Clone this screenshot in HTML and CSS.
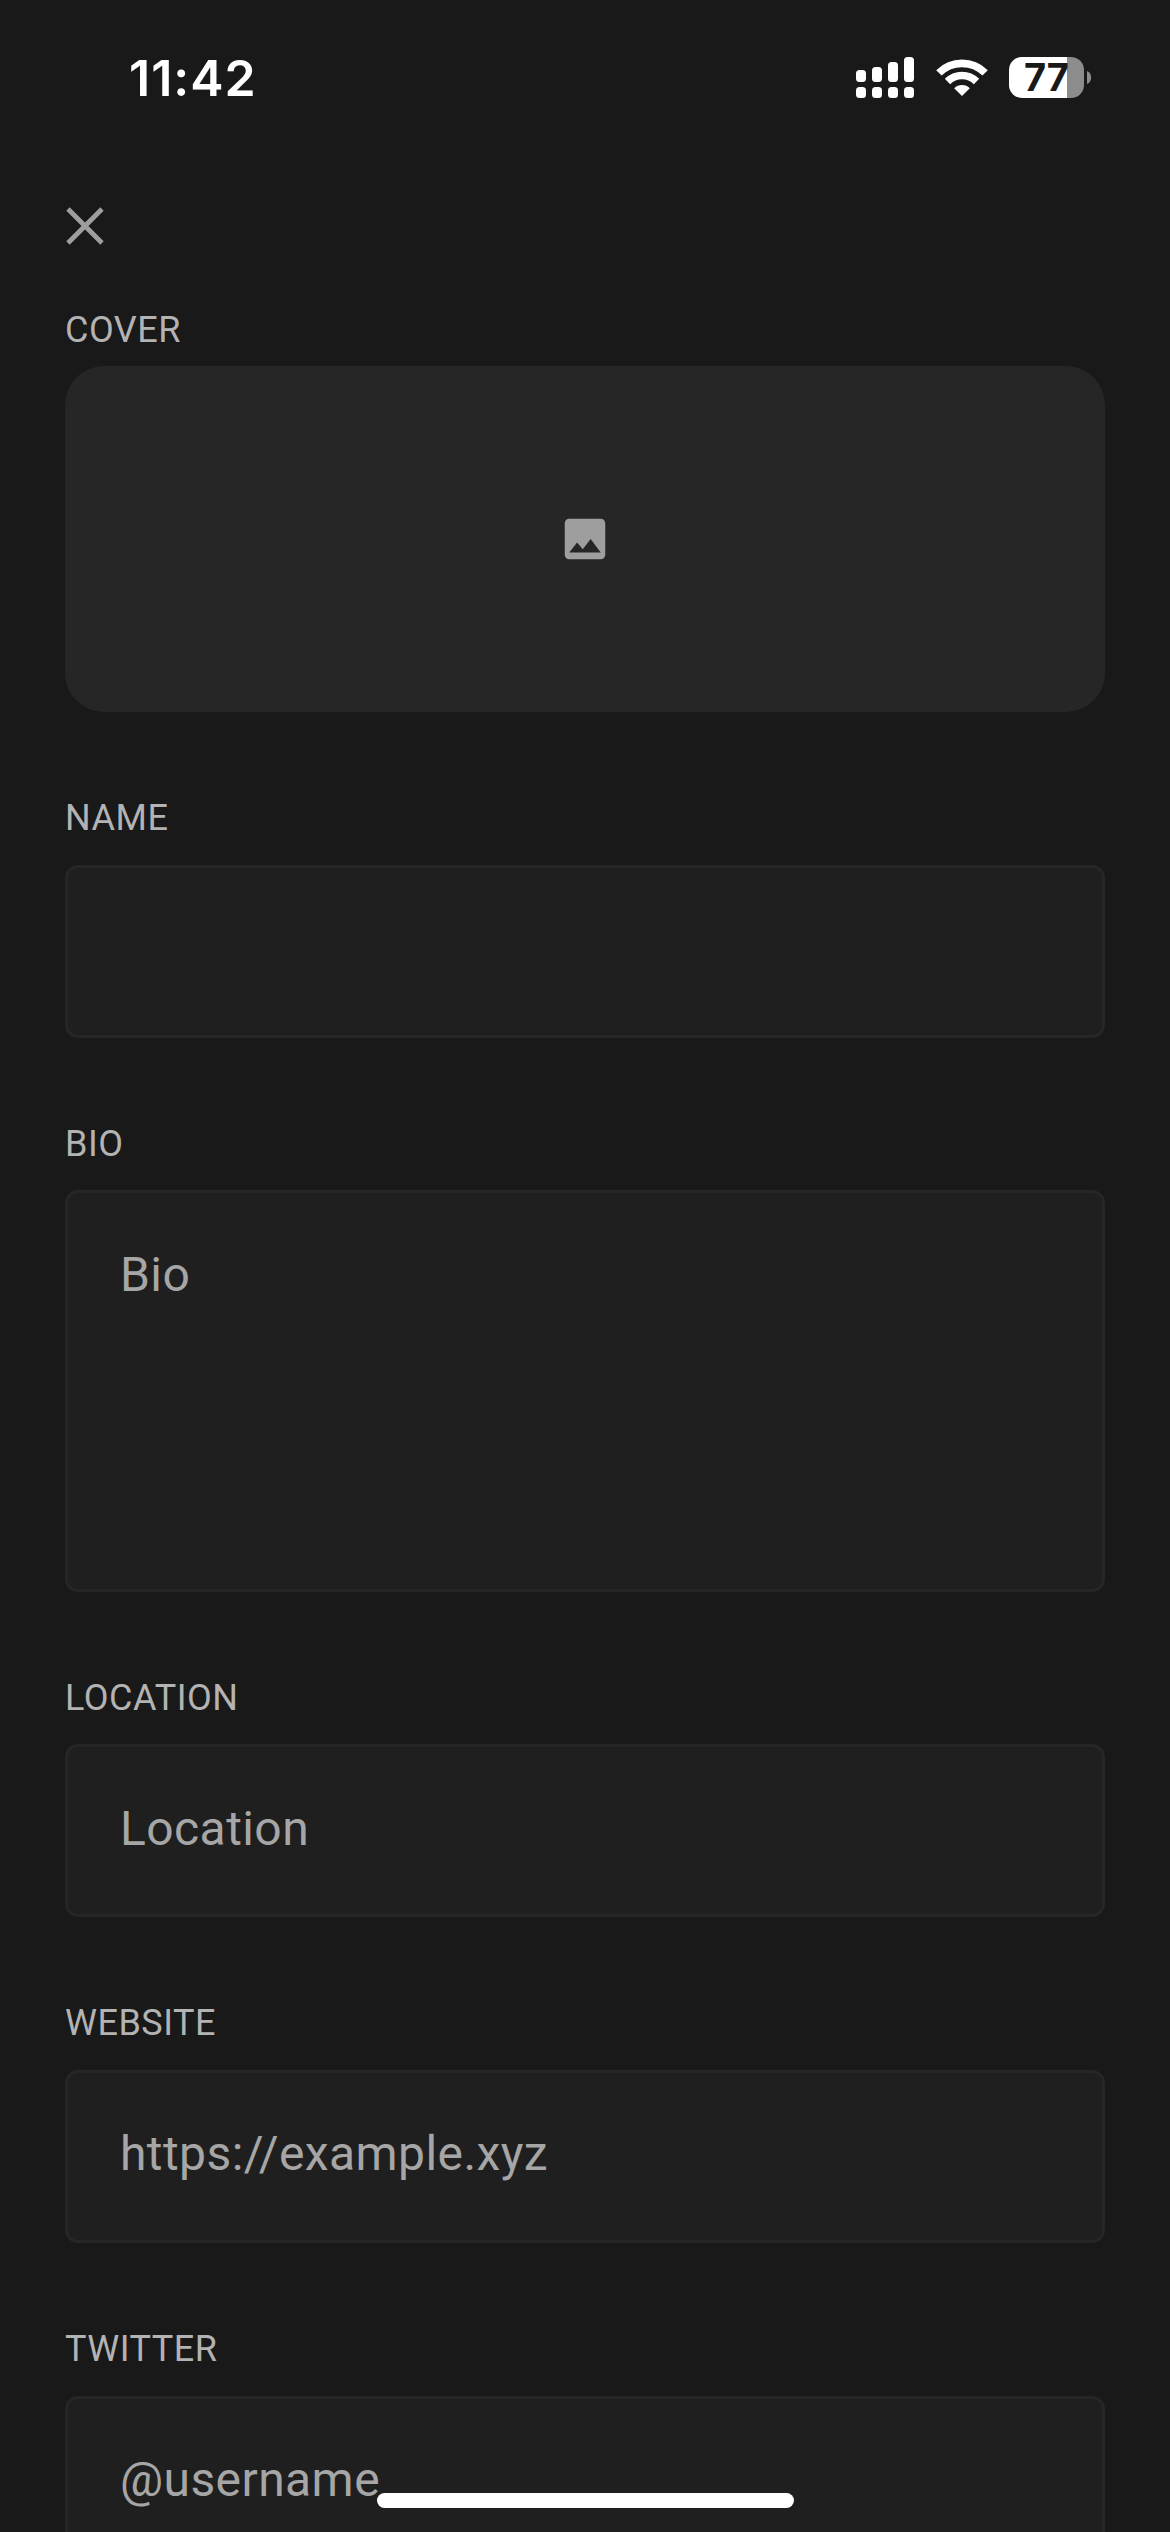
FILE: index.html
```html
<!DOCTYPE html>
<html lang="en">
<head>
<meta charset="utf-8">
<title>Edit profile</title>
<link rel="stylesheet" href="styles.css">
</head>
<body>
<div class="screen">
  <header class="status">
    <span class="time">11:42</span>
    <div class="indicators">
      <svg class="signal" width="58" height="41" viewBox="0 0 58 41" fill="#fff">
        <rect x="0" y="13" width="10" height="12" rx="3.5"/><rect x="16" y="10" width="10" height="15" rx="3.5"/><rect x="32" y="5" width="10" height="20" rx="3.5"/><rect x="48" y="0" width="10" height="25" rx="3.5"/>
        <rect x="0" y="30" width="10" height="11" rx="3.5"/><rect x="16" y="30" width="10" height="11" rx="3.5"/><rect x="32" y="30" width="10" height="11" rx="3.5"/><rect x="48" y="30" width="10" height="11" rx="3.5"/>
      </svg>
      <svg class="wifi" width="52" height="41" viewBox="0 0 52 41">
        <g fill="none" stroke="#fff" stroke-width="7.6">
          <path d="M2.9 15.9A32.7 32.7 0 0 1 49.1 15.9"/>
          <path d="M11.5 24.5A20.5 20.5 0 0 1 40.5 24.5"/>
        </g>
        <path d="M26 39L18.2 31.2A11 11 0 0 1 33.8 31.2Z" fill="#fff"/>
      </svg>
      <div class="battery"><span class="level">77</span></div>
      <svg class="cap" width="5" height="13" viewBox="0 0 5 13"><path d="M0 0C5.5 2 5.5 11 0 13Z" fill="#8c8c8c"/></svg>
    </div>
  </header>
  <nav class="toolbar">
    <svg class="close" width="38" height="38" viewBox="0 0 38 38"><path d="M2 2L36 36M36 2L2 36" stroke="#9e9e9e" stroke-width="4.8"/></svg>
  </nav>
  <main class="form">
    <div class="label label-cover">COVER</div>
    <div class="cover">
      <svg width="54" height="54" viewBox="0 0 24 24" fill="#9e9e9e"><path d="M21 19V5c0-1.100-.9-2-2-2H5c-1.100 0-2 .9-2 2v14c0 1.100.9 2 2 2h14c1.100 0 2-.9 2-2zM8.500 13.500l2.500 3.010L14.500 12l4.500 6H5l3.500-4.500z"/></svg>
    </div>
    <div class="label">NAME</div>
    <div class="field"></div>
    <div class="label">BIO</div>
    <div class="field field-bio">Bio</div>
    <div class="label">LOCATION</div>
    <div class="field">Location</div>
    <div class="label">WEBSITE</div>
    <div class="field">https://example.xyz</div>
    <div class="label">TWITTER</div>
    <div class="field">@username</div>
  </main>
  <div class="home"></div>
</div>
</body>
</html>
```
FILE: styles.css
```css
* { box-sizing: border-box; }
html, body { margin: 0; background: #191919; }
body { height: 2532px; overflow: hidden; font-family: Roboto, sans-serif; }
svg { display: block; flex: none; }
.screen { position: relative; width: 1170px; height: 2532px; overflow: hidden; display: flex; flex-direction: column; background: #191919; }
.status {
  height: 155px; flex: none; padding: 0 78px 0 129px;
  display: flex; align-items: center; justify-content: space-between;
  font-family: Inter, sans-serif; color: #fff;
}
.time { padding-top: 1px; font-size: 50px; line-height: 60px; font-weight: 600; letter-spacing: 1px; }
.indicators { display: flex; align-items: center; }
.wifi { margin-left: 21.500px; }
.battery {
  width: 75px; height: 41px; margin-left: 21.500px; border-radius: 13px;
  background: linear-gradient(to right, #fff 58px, #8c8c8c 58px);
}
.level { display: block; padding-left: 15px; font-size: 38px; line-height: 41px; font-weight: 700; color: #191919; }
.cap { margin-left: 3px; }
.toolbar { height: 147px; flex: none; padding: 52px 0 0 66px; }
.form { flex: none; padding: 0 65px; }
.label {
  height: 152.670px; padding-top: 84px;
  font-size: 36px; line-height: 44px; letter-spacing: .5px; color: #b3b3b3;
}
.label-cover { height: 64px; padding-top: 6px; }
.cover { height: 346px; border-radius: 39px; background: #262626; display: flex; align-items: center; justify-content: center; }
.field {
  height: 173px; padding: 53.500px 52px 0; border: 3px solid #262626; border-radius: 13px; background: #1f1f1f;
  font-size: 48px; line-height: 56px; letter-spacing: .42px; color: #a6a6a6;
}
.field-bio { height: 401.330px; }
.home { position: absolute; left: 377px; top: 2493px; width: 417px; height: 15px; border-radius: 8px; background: #fff; }
```
